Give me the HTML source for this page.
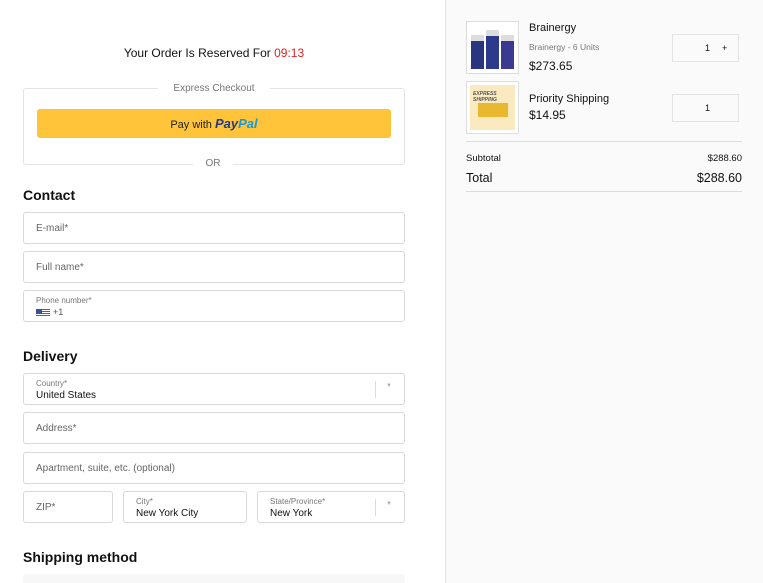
<!DOCTYPE html>
<html style="width:763px;height:583px;overflow:hidden"><head><style>
*{box-sizing:border-box;margin:0;padding:0}
body{width:763px;height:583px;overflow:hidden;background:#fff;font-family:"Liberation Sans",sans-serif;position:relative;color:#111}
.a{position:absolute}
.in{position:absolute;border:1px solid #d9d9d9;border-radius:3px;background:#fff;left:23px;width:382px}
.ph{position:absolute;left:12px;font-size:10px;color:#666}
.lb{position:absolute;left:12px;top:5px;font-size:8px;color:#777}
.vl{position:absolute;left:12px;top:16px;font-size:10px;color:#111}
h2{position:absolute;left:23px;font-size:14px;font-weight:bold;color:#111}
.sep{position:absolute;right:28px;top:7px;width:1px;height:17px;background:#ddd}
.car{position:absolute;right:12px;top:9px;font-size:6px;color:#aaa}
</style></head><body>
<div class="a" style="left:0;top:46px;width:428px;text-align:center;font-size:12px">Your Order Is Reserved For <span style="color:#e02020">09:13</span></div>
<div class="a" style="left:23px;top:88px;width:382px;height:77px;border:1px solid #e3e3e3;border-radius:3px"></div>
<div class="a" style="left:158px;top:83px;width:112px;background:#fff;text-align:center;font-size:10px;color:#777">Express Checkout</div>
<div class="a" style="left:37px;top:109px;width:354px;height:29px;background:#ffc439;border-radius:3px;text-align:center;line-height:29px;font-size:11px;color:#222">Pay with <b style="font-style:italic;color:#253b80;font-size:13px">Pay<span style="color:#179bd7">Pal</span></b></div>
<div class="a" style="left:193px;top:158px;width:40px;background:#fff;text-align:center;font-size:10px;color:#777">OR</div>
<h2 style="top:187px">Contact</h2>
<div class="in" style="top:212px;height:32px"><span class="ph" style="top:10px">E-mail*</span></div>
<div class="in" style="top:251px;height:32px"><span class="ph" style="top:10px">Full name*</span></div>
<div class="in" style="top:290px;height:32px"><span class="lb">Phone number*</span><span class="a" style="left:12px;top:18px;width:14px;height:8px;background:repeating-linear-gradient(#c33 0 1px,#fff 1px 2px)"><span class="a" style="left:0;top:0;width:6px;height:5px;background:#3b4f9a"></span></span><span class="a" style="left:29px;top:16px;font-size:9px;color:#555">+1</span></div>
<h2 style="top:348px">Delivery</h2>
<div class="in" style="top:373px;height:32px"><span class="lb">Country*</span><span class="vl">United States</span><span class="sep"></span><span class="car">▼</span></div>
<div class="in" style="top:412px;height:32px"><span class="ph" style="top:10px">Address*</span></div>
<div class="in" style="top:452px;height:32px"><span class="ph" style="top:10px">Apartment, suite, etc. (optional)</span></div>
<div class="in" style="top:491px;height:32px;width:90px"><span class="ph" style="top:10px">ZIP*</span></div>
<div class="in" style="top:491px;height:32px;left:123px;width:124px"><span class="lb">City*</span><span class="vl">New York City</span></div>
<div class="in" style="top:491px;height:32px;left:257px;width:148px"><span class="lb">State/Province*</span><span class="vl">New York</span><span class="sep"></span><span class="car">▼</span></div>
<h2 style="top:549px">Shipping method</h2>
<div class="a" style="left:23px;top:574px;width:382px;height:20px;background:#f7f7f7;border-radius:3px"></div>

<div class="a" style="left:445px;top:0;width:318px;height:583px;background:#fafafa;border-left:1px solid #e3e3e3"></div>
<div class="a" style="left:466px;top:21px;width:53px;height:53px;border:1px solid #ddd;background:#fff;padding:4px">
<div style="display:flex;gap:2px;height:100%;align-items:flex-end"><div style="flex:1;height:80%;background:#2a3580;border-top:6px solid #ddd"></div><div style="flex:1;height:90%;background:#2d3a8c;border-top:6px solid #ddd"></div><div style="flex:1;height:80%;background:#3a3a90;border-top:6px solid #ddd"></div></div></div>
<div class="a" style="left:466px;top:81px;width:53px;height:53px;border:1px solid #ddd;background:#fff;padding:3px"><div style="width:100%;height:100%;background:#fbeac0;position:relative"><div class="a" style="left:8px;top:18px;width:30px;height:14px;background:#e8b830"></div><div class="a" style="left:3px;top:6px;font-size:5px;font-weight:bold;color:#555;font-style:italic">EXPRESS<br>SHIPPING</div></div></div>
<div class="a" style="left:529px;top:22px;font-size:11px">Brainergy</div>
<div class="a" style="left:529px;top:42px;font-size:8.5px;color:#777">Brainergy - 6 Units</div>
<div class="a" style="left:529px;top:59px;font-size:12px">$273.65</div>
<div class="a" style="left:529px;top:93px;font-size:11px">Priority Shipping</div>
<div class="a" style="left:529px;top:108px;font-size:12px">$14.95</div>
<div class="a" style="left:672px;top:34px;width:67px;height:28px;border:1px solid #e3e3e3;background:#fafafa;font-size:9px"><span class="a" style="left:32px;top:8px">1</span><span class="a" style="left:49px;top:8px">+</span></div>
<div class="a" style="left:672px;top:94px;width:67px;height:28px;border:1px solid #e3e3e3;background:#fafafa;font-size:9px"><span class="a" style="left:32px;top:8px">1</span></div>
<div class="a" style="left:466px;top:141px;width:276px;height:1px;background:#ddd"></div>
<div class="a" style="left:466px;top:153px;font-size:9.5px">Subtotal</div>
<div class="a" style="right:21px;top:153px;font-size:9.5px">$288.60</div>
<div class="a" style="left:466px;top:171px;font-size:12.5px">Total</div>
<div class="a" style="right:21px;top:171px;font-size:12.5px">$288.60</div>
<div class="a" style="left:466px;top:191px;width:276px;height:1px;background:#ddd"></div>
</body></html>
